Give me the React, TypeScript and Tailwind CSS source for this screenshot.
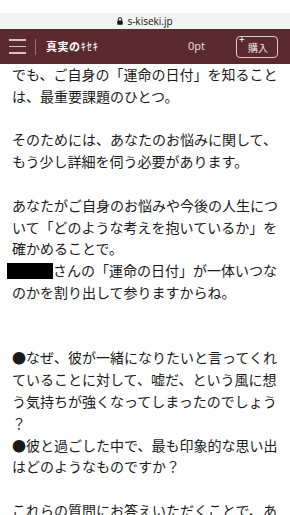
import React from "react";

const jp = { fontFamily: '"Noto Sans CJK JP", "Noto Sans", sans-serif' };

const Header: React.FC = () => {
  return (
    <div className="bg-white">
      {/* status strip + url bar */}
      <div className="h-[13px] bg-white" />
      <div className="h-[16px] bg-[#f3f3f3] flex items-center justify-center gap-[4px]">
        <svg width="6" height="8" viewBox="0 0 6 8">
          <path d="M1.3 3.6V2.4a1.7 1.7 0 0 1 3.4 0v1.2" fill="none" stroke="#111" strokeWidth="1" />
          <rect x="0.3" y="3.5" width="5.4" height="4.2" rx="0.6" fill="#111" />
        </svg>
        <span className="text-[10px] leading-none text-[#111]" style={{ fontFamily: '"Open Sans", sans-serif' }}>
          s-kiseki.jp
        </span>
      </div>

      {/* site header */}
      <div className="h-[35px] bg-[#5a2a2e] flex items-center pl-[9px] pr-[12px]" style={jp}>
        <div className="w-[17px] flex flex-col gap-[5px]">
          <span className="block h-[1.5px] bg-[#d8c2c2]" />
          <span className="block h-[1.5px] bg-[#d8c2c2]" />
          <span className="block h-[1.5px] bg-[#d8c2c2]" />
        </div>
        <div className="ml-[9px] w-px h-[16px] bg-[#9c7476]" />
        <div className="ml-[10px] text-white text-[11px] font-bold tracking-[0.5px]">
          真実の<span className="font-normal">ｷｾｷ</span>
        </div>
        <div className="flex-1" />
        <span className="text-[11px] text-[#ece3e3]" style={{ fontFamily: '"Open Sans", sans-serif' }}>
          0pt
        </span>
        <div className="ml-[31px] relative w-[42px] h-[22px] border border-[#dcc8c8] rounded-[4px] flex items-center justify-center">
          <span className="absolute left-[2px] top-[-3px] text-[10px] text-white leading-none">+</span>
          <span className="text-[10px] text-[#f1e8e8] mt-[1px] ml-[2px]">購入</span>
        </div>
      </div>
    </div>
  );
};

const App: React.FC = () => {
  return (
    <div className="w-[290px] bg-white min-h-screen" style={jp}>
      <Header />
      <div className="px-3 text-[14px] leading-[21.8px] text-[#1a1a1a]">
        <p>でも、ご自身の「運命の日付」を知ることは、最重要課題のひとつ。</p>
        <p className="mt-[21.8px]">そのためには、あなたのお悩みに関して、もう少し詳細を伺う必要があります。</p>
        <p className="mt-[21.8px]">
          あなたがご自身のお悩みや今後の人生について「どのような考えを抱いているか」を確かめることで。
          <br />
          <span className="inline-block align-middle w-[46px] h-[16px] bg-black ml-[-5px] mt-[-3px]" />
          さんの「運命の日付」が一体いつなのかを割り出して参りますからね。
        </p>
        <p className="mt-[43.6px]">
          ●なぜ、彼が一緒になりたいと言ってくれていることに対して、嘘だ、という風に想う気持ちが強くなってしまったのでしょう
          <br />？
          <br />
          ●彼と過ごした中で、最も印象的な思い出はどのようなものですか？
        </p>
        <p className="mt-[21.8px]">
          これらの質問にお答えいただくことで、あなたの運命の日付がより正確に導き出されます。
        </p>
      </div>
    </div>
  );
};

export default App;
